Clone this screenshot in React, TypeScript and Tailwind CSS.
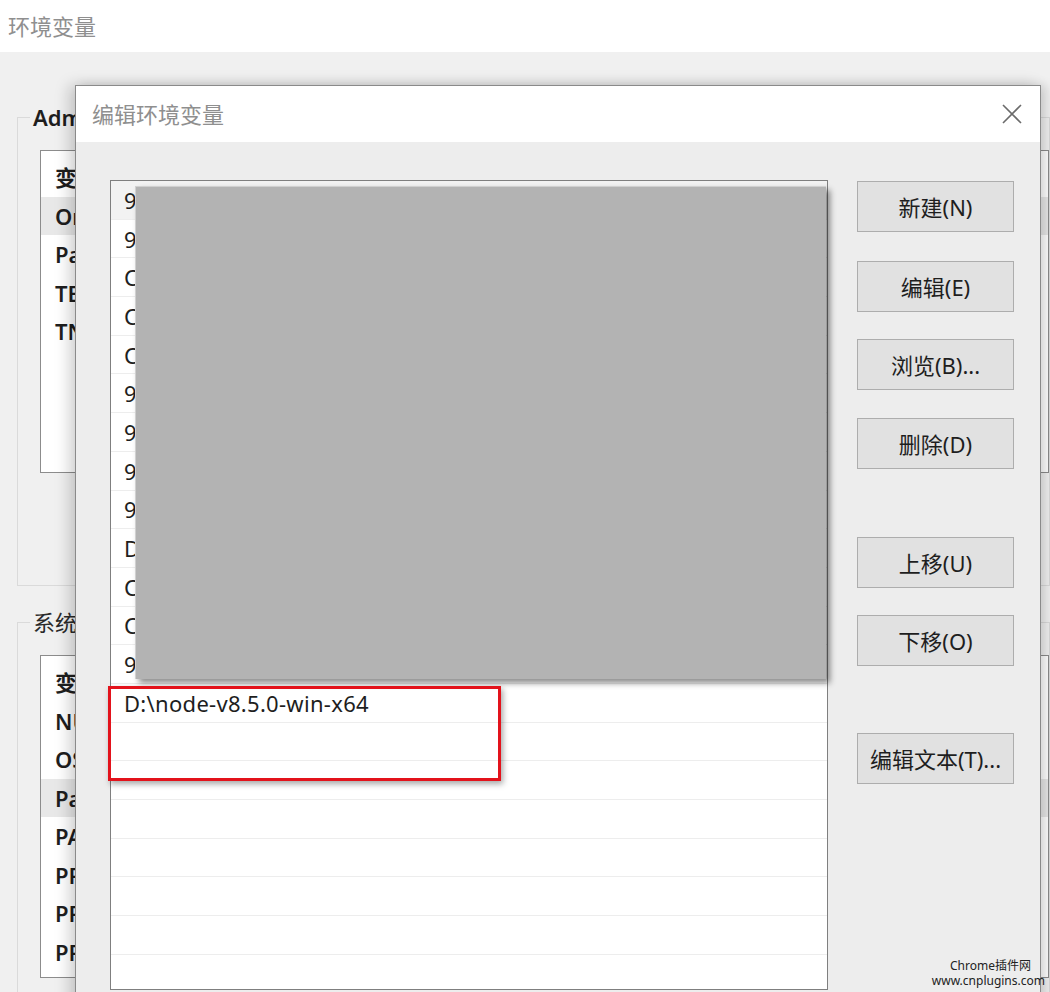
import React from 'react';

const bgTop = ['变', 'Or', 'Pa', 'TE', 'TN'];
const bgBottom = ['变', 'NU', 'OS', 'Pa', 'PA', 'PF', 'PF', 'PF'];
const pathRows = ['9', '9', 'C', 'C', 'C', '9', '9', '9', '9', 'D', 'C', 'C', '9', 'D:\\node-v8.5.0-win-x64', '', '', '', '', '', '', ''];

const buttons: { label: string; mt: string }[] = [
  { label: '新建(N)', mt: 'mt-0' },
  { label: '编辑(E)', mt: 'mt-[29px]' },
  { label: '浏览(B)...', mt: 'mt-[27px]' },
  { label: '删除(D)', mt: 'mt-[28px]' },
  { label: '上移(U)', mt: 'mt-[68px]' },
  { label: '下移(O)', mt: 'mt-[27px]' },
  { label: '编辑文本(T)...', mt: 'mt-[67px]' },
];

const GroupList = ({ items, active }: { items: string[]; active: number }) => (
  <div className="ml-[22px] mt-[22px] h-[323px] border border-[#8c8c8c] bg-white pt-[7px]">
    {items.map((t, i) => (
      <div
        key={i}
        className={`h-[38.5px] flex items-center pl-[14px] font-semibold text-[#1e1e1e] ${i === active ? 'bg-[#e8e8e8]' : ''}`}
      >
        {t}
      </div>
    ))}
  </div>
);

export default function App() {
  return (
    <div className="relative w-[1050px] h-[992px] overflow-hidden bg-[#f0f0f0] font-['Noto_Sans','Noto_Sans_CJK_SC',sans-serif] text-[22px] leading-none">
      {/* background window */}
      <div className="h-[52px] bg-white flex items-center pl-[8px] text-[#8f8f8f]">环境变量</div>
      <div className="flex">
        <div className="flex-1 pl-[17px]">
          <fieldset className="mt-[54px] h-[480px] border border-[#dadada]">
            <legend className="ml-[12px] px-[3px] font-semibold text-[#1e1e1e]">Admin</legend>
            <GroupList items={bgTop} active={1} />
          </fieldset>
          <fieldset className="mt-[25px] h-[420px] border border-[#dadada]">
            <legend className="ml-[12px] px-[3px] text-[#2a2a2a]">系统变量</legend>
            <GroupList items={bgBottom} active={3} />
          </fieldset>
        </div>
      </div>

      {/* edit dialog */}
      <div className="absolute left-[75px] top-[85px] w-[966px] h-[930px] border border-[#8a8a8a] bg-[#ededed] shadow-[-6px_0_14px_rgba(0,0,0,0.18),6px_0_10px_rgba(0,0,0,0.12)] flex flex-col">
        <div className="h-[56px] bg-white flex items-center justify-between pl-[16px] pr-[18px] text-[#8f8f8f]">
          <span>编辑环境变量</span>
          <svg width="20" height="20" viewBox="0 0 20 20">
            <path d="M1 1 L19 19 M19 1 L1 19" stroke="#6b6b6b" strokeWidth="1.6" fill="none" />
          </svg>
        </div>
        <div className="flex pl-[34px] pt-[38px]">
          <div className="relative w-[718px] h-[810px] border border-[#7f7f7f] bg-white">
            {pathRows.map((t, i) => (
              <div
                key={i}
                className={`h-[38.7px] flex items-center pl-[13px] tracking-[0.3px] text-[#1e1e1e] border-b border-[#ededed] ${i === 0 ? 'bg-[#f2f2f2]' : ''}`}
              >
                {t}
              </div>
            ))}
            <div className="absolute left-[24px] top-[5px] w-[691px] h-[493px] bg-[#b3b3b3] border-t border-l border-[#d0d0d0] shadow-[4px_4px_6px_rgba(0,0,0,0.45)]" />
            <div className="absolute left-[-3px] top-[505px] w-[393px] h-[95px] border-[3px] border-[#e3121b] shadow-[2px_3px_6px_rgba(0,0,0,0.35)]" />
          </div>
          <div className="ml-[29px] pt-[1px] flex flex-col">
            {buttons.map((b) => (
              <div
                key={b.label}
                className={`${b.mt} w-[157px] h-[51px] border border-[#adadad] bg-[#e1e1e1] flex items-center justify-center text-[#1e1e1e]`}
              >
                {b.label}
              </div>
            ))}
          </div>
        </div>
      </div>

      {/* watermark */}
      <div className="absolute right-[5px] bottom-[4px] text-[12px] leading-[15px] text-[#222] text-right">
        <div className="pr-[14px]">Chrome插件网</div>
        <div>www.cnplugins.com</div>
      </div>
    </div>
  );
}
